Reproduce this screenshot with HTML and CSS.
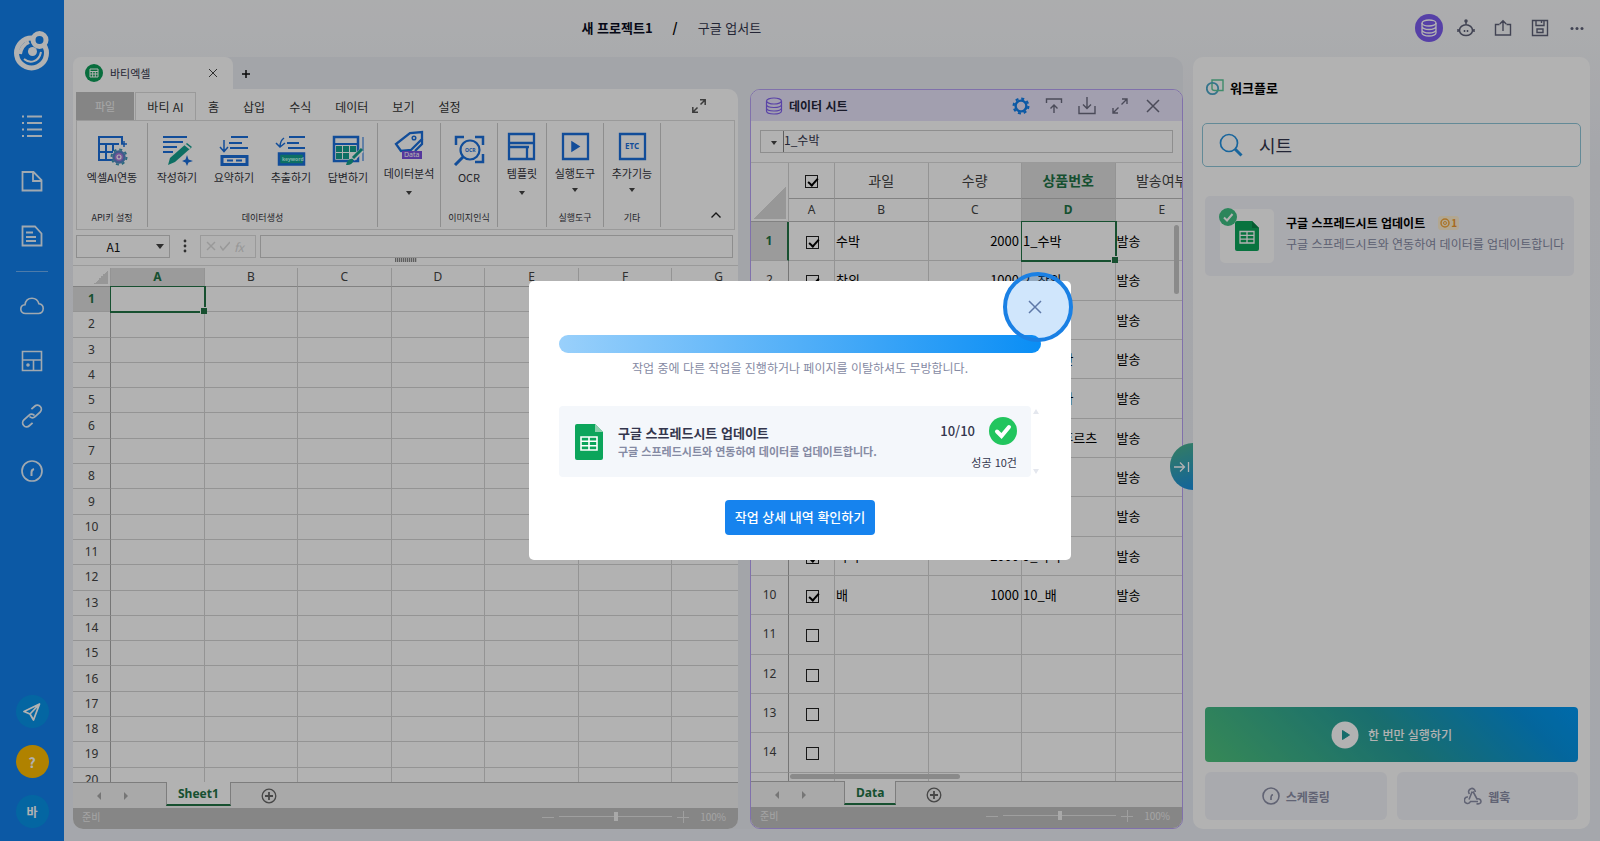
FILE: index.html
```html
<!DOCTYPE html>
<html lang="ko">
<head>
    <meta charset="UTF-8">
    <meta name="viewport" content="width=device-width, initial-scale=1.0">
    <title>새 프로젝트1</title>
    <link rel="stylesheet" href="styles.css">
</head>
<body>
    <div class="app">
        <nav class="sidebar">
            <a href="#" class="logo" aria-label="홈">
                <svg width="36" height="40" viewBox="0 0 36 40" fill="none" stroke="#fff">
                    <circle cx="17.500" cy="22" r="15" stroke-width="5"/>
                    <circle cx="25.500" cy="9" r="6.500" fill="#1280ec" stroke-width="5"/>
                    <circle cx="18.500" cy="20.500" r="4.500" fill="#fff" stroke="none"/>
                    <path d="M10 28c6 5 15 3 17-7" stroke-width="2"/>
                    <path d="M6 23c1-6 4-10 9-12" stroke-width="4"/>
                </svg>
            </a>
            <a href="#" class="nav-item" aria-label="목록">
                <svg width="24" height="24" viewBox="0 0 24 24" fill="none" stroke="#fff" stroke-width="1.800"><path d="M7 2.500h15M7 9h15M7 15.500h15M7 22h15M2 2.500h2M2 9h2M2 15.500h2M2 22h2"/></svg>
            </a>
            <a href="#" class="nav-item" aria-label="파일">
                <svg width="24" height="24" viewBox="0 0 24 24" fill="none" stroke="#fff" stroke-width="1.800"><path d="M2.500 3h11l8 8v10.500h-19zM13 3v9h8.500"/></svg>
            </a>
            <a href="#" class="nav-item" aria-label="문서">
                <svg width="24" height="24" viewBox="0 0 24 24" fill="none" stroke="#fff" stroke-width="1.800"><path d="M2.500 2.500h12.500l6.500 7v12h-19zM6 8.500h7M6 13h10M6 17h10"/></svg>
            </a>
            <hr class="nav-line">
            <a href="#" class="nav-item" aria-label="클라우드">
                <svg width="24" height="24" viewBox="0 0 24 24" fill="none" stroke="#fff" stroke-width="1.600"><path d="M5.500 19.500C2.500 19.500.8 17.500.8 15.200c0-2.500 1.800-4.200 4.200-4.400C5.500 7 8.200 4.300 12 4.300c3.500 0 6 2.200 6.900 5.500 2.600.3 4.300 2.300 4.300 4.800 0 2.800-2 4.900-4.700 4.900z"/></svg>
            </a>
            <a href="#" class="nav-item" aria-label="템플릿">
                <svg width="24" height="24" viewBox="0 0 24 24" fill="none" stroke="#fff" stroke-width="1.600"><path d="M2.500 2.500h19v19h-19zM2.500 11h19M13.500 11v10.500"/><circle cx="8" cy="16" r="1" fill="#fff"/></svg>
            </a>
            <a href="#" class="nav-item" aria-label="링크">
                <svg width="24" height="24" viewBox="0 0 24 24" fill="none" stroke="#fff" stroke-width="1.800"><path d="M9.500 12.500a4 4 0 0 0 5.600.2l5-4.600a4 4 0 0 0-5.400-5.900l-3.300 3M14.500 11.500a4 4 0 0 0-5.600-.2l-5 4.600a4 4 0 0 0 5.400 5.900l3.300-3"/></svg>
            </a>
            <a href="#" class="nav-item" aria-label="스케줄">
                <svg width="24" height="24" viewBox="0 0 24 24" fill="none" stroke="#fff" stroke-width="1.700"><circle cx="12" cy="12" r="10"/><path d="M11.500 17v-3.500c0-2 .8-3 2.500-3.500" stroke-width="2"/></svg>
            </a>
            <div class="sidebar-bottom">
                <button class="round-btn" aria-label="보내기">
                    <svg width="20" height="20" viewBox="0 0 20 20" fill="none" stroke="#fff" stroke-width="1.800" stroke-linejoin="round"><path d="M17.500 2L2 9.500l6 2.500 3.500 6zM17.500 2L8 12"/></svg>
                </button>
                <button class="round-btn round-help">?</button>
                <button class="round-btn">바</button>
            </div>
        </nav>

        <div class="page">
            <header class="topbar">
                <div class="crumbs"><b>새 프로젝트1</b><span class="slash">/</span><span>구글 업서트</span></div>
                <div class="top-actions">
                    <button class="db-btn" aria-label="데이터 시트">
                        <svg width="18" height="18" viewBox="0 0 18 18" fill="none" stroke="#fff" stroke-width="1.300"><ellipse cx="9" cy="4" rx="7" ry="3"/><path d="M2 4v3.500c0 1.600 3 3 7 3s7-1.400 7-3V4M2 7.500V11c0 1.600 3 3 7 3s7-1.400 7-3V7.500M2 11v3c0 1.600 3 3 7 3s7-1.400 7-3v-3"/></svg>
                    </button>
                    <button aria-label="봇">
                        <svg width="18" height="18" viewBox="0 0 18 18" fill="none" stroke="#5e6178" stroke-width="1.500"><path d="M2.500 11.500a6.500 5.800 0 0 1 13 0 6.500 5 0 0 1-13 0zM9 5.500V1.500M1 10v3M17 10v3M7.500 11v2M10.500 11v2"/><circle cx="9" cy="2" r="1"/></svg>
                    </button>
                    <button aria-label="내보내기">
                        <svg width="18" height="18" viewBox="0 0 18 18" fill="none" stroke="#5e6178" stroke-width="1.400"><path d="M5.500 5.500h-4v10.500h15V5.500h-4M9 12V2M5.800 5L9 1.800 12.200 5"/></svg>
                    </button>
                    <button aria-label="저장">
                        <svg width="18" height="18" viewBox="0 0 18 18" fill="none" stroke="#5e6178" stroke-width="1.400"><path d="M1.500 1.500h15v15h-15zM5 1.500v5h8v-5M10.500 2v2M6 10h6v3.500H6z"/></svg>
                    </button>
                    <button aria-label="더보기">
                        <svg width="18" height="18" viewBox="0 0 18 18" fill="#5e6178"><circle cx="4" cy="9.500" r="1.500"/><circle cx="9" cy="9.500" r="1.500"/><circle cx="14" cy="9.500" r="1.500"/></svg>
                    </button>
                </div>
            </header>

            <main class="content">
                <div class="workspace">
                    <div class="file-tabs">
                        <div class="file-tab">
                            <svg width="18" height="18" viewBox="0 0 18 18"><circle cx="9" cy="9" r="9" fill="#0c9d58"/><path d="M5 5h8v8H5zM5 7.500h8M5 10h8M7.700 7.500V13M10.300 7.500V13" fill="none" stroke="#fff"/></svg>
                            <span>바티엑셀</span>
                            <button class="tab-close" aria-label="탭 닫기"><svg width="10" height="10" viewBox="0 0 10 10" stroke="#444"><path d="M1 1l8 8M9 1l-8 8"/></svg></button>
                        </div>
                        <button class="tab-add" aria-label="탭 추가"><svg width="8" height="8" viewBox="0 0 8 8" stroke="#111" stroke-width="1.500"><path d="M4 0v8M0 4h8"/></svg></button>
                    </div>

                    <div class="panels">
                        <section class="panel excel">
                            <div class="menu">
                                <button class="menu-file">파일</button>
                                <button class="menu-active">바티 AI</button>
                                <button>홈</button>
                                <button>삽입</button>
                                <button>수식</button>
                                <button>데이터</button>
                                <button>보기</button>
                                <button>설정</button>
                                <button class="expand" aria-label="확대"><svg width="16" height="16" viewBox="0 0 16 16" fill="none" stroke="#555" stroke-width="1.500"><path d="M9.500 6.500L14 2M9 1.800h5.200V7M6.500 9.500L2 14M1.800 9v5.200H7"/></svg></button>
                            </div>
                            <div class="ribbon">
                                <div class="group g-key">
                                    <div class="tools">
                                        <button class="tool">
                                            <svg width="32" height="32" viewBox="0 0 32 32" fill="none" stroke="#1b6fdc" stroke-width="2"><path d="M17 26H3V3h23v7M3 10h20M3 18h14M10 10v16M17 10v7"/><path d="M28 7v6M25 10h6" stroke-width="1.500"/><circle cx="23" cy="23" r="5.500" fill="#a878d8" stroke="#5a86c8" stroke-width="2.500"/><circle cx="23" cy="23" r="7.500" stroke="#3f97b5" stroke-width="2" stroke-dasharray="3 2.890"/><circle cx="23" cy="23" r="2" stroke="#fff" stroke-width="1.200"/></svg>
                                            <span>엑셀AI연동</span>
                                        </button>
                                    </div>
                                    <p>API키 설정</p>
                                </div>
                                <div class="group g-data">
                                    <div class="tools">
                                        <button class="tool">
                                            <svg width="32" height="32" viewBox="0 0 32 32" fill="none" stroke="#1b6fdc" stroke-width="2"><path d="M2 3h24M2 8h20M2 13h14M2 18h10"/><path d="M7 31l2-7L26 9l5 4-17 15z" fill="#14a08f" stroke="none"/><path d="M24 10.500l5 4" stroke="#fff"/><path d="M26 21l1.500 4.500L32 27l-4.500 1.500L26 32l-1.500-3.500L21 27l3.500-1.500z" fill="#1b6fdc" stroke="none"/></svg>
                                            <span>작성하기</span>
                                        </button>
                                        <button class="tool">
                                            <svg width="32" height="32" viewBox="0 0 32 32" fill="none" stroke="#1b6fdc" stroke-width="2"><path d="M13 3h17M11 9h13M12 14h18"/><path d="M6 6v11M2 13l4 4.500L10 13" stroke-width="1.500"/><path d="M4 22.500h25v8H4z" stroke-width="3"/><path d="M9 26.500h6M18 26.500h6" stroke-width="2"/></svg>
                                            <span>요약하기</span>
                                        </button>
                                        <button class="tool">
                                            <svg width="32" height="32" viewBox="0 0 32 32" fill="none" stroke="#1b6fdc" stroke-width="2"><path d="M14 3h16M12 9h12M13 14h17"/><path d="M9 4c-3 2-4 5-4 9M1 9l4 4 5-4" stroke-width="1.500"/><path d="M4 19.500h25v11H4z" fill="#14a08f" stroke-width="2.500"/><text x="7" y="27" class="kw-text">keyword</text></svg>
                                            <span>추출하기</span>
                                        </button>
                                        <button class="tool">
                                            <svg width="32" height="32" viewBox="0 0 32 32" fill="none" stroke="#1b6fdc" stroke-width="2"><path d="M2 3h24v24H2z" stroke-width="2.500"/><path d="M2 10h24" /><path d="M4 12h6v6H4zM11 12h6v6h-6zM18 12h6v6h-6zM4 19h6v6H4zM11 19h6v6h-6z" fill="#14a08f" stroke="none"/><path d="M31 3v24" stroke-width="1"/><path d="M30 16l-9 9" stroke="#fff" stroke-width="5"/><path d="M30 15l-9 9" stroke="#14a08f" stroke-width="3"/><path d="M14 31c1-5 4-7 7-6 1 4-2 6-7 6z" fill="#14a08f" stroke="none"/></svg>
                                            <span>답변하기</span>
                                        </button>
                                    </div>
                                    <p>데이터생성</p>
                                </div>
                                <div class="group g-63">
                                    <div class="tools tools-up">
                                        <button class="tool">
                                            <svg width="32" height="32" viewBox="0 0 32 32" fill="none" stroke="#1b6fdc" stroke-width="2.300"><path d="M8 21l-5-7L17 3l12-1v7L18 20z"/><circle cx="21" cy="8" r="1.800" stroke-width="1.500"/><path d="M29 9v5l-7 7"/><rect x="9" y="21" width="20" height="8" fill="#7a4fe0" stroke="none"/><text x="11" y="27" class="data-text">Data</text></svg>
                                            <span>데이터분석</span><i class="caret caret-low"></i>
                                        </button>
                                    </div>
                                </div>
                                <div class="group g-57">
                                    <div class="tools">
                                        <button class="tool">
                                            <svg width="32" height="32" viewBox="0 0 32 32" fill="none" stroke="#1b6fdc" stroke-width="2.500"><path d="M3 11V3h8M22 3h8v8M30 20v8h-8"/><circle cx="17" cy="16" r="9.500" stroke-width="2.200"/><path d="M10 23l-8 8" stroke-width="3"/><text x="12" y="18" class="ocr-text">OCR</text></svg>
                                            <span>OCR</span>
                                        </button>
                                    </div>
                                    <p>이미지인식</p>
                                </div>
                                <div class="group g-49">
                                    <div class="tools tools-up">
                                        <button class="tool">
                                            <svg width="32" height="32" viewBox="0 0 32 32" fill="none" stroke="#1b6fdc" stroke-width="2.300"><path d="M3 4h25v25H3zM3 13h25M3 17h20M21 17v12"/></svg>
                                            <span>템플릿</span><i class="caret caret-low"></i>
                                        </button>
                                    </div>
                                </div>
                                <div class="group g-57">
                                    <div class="tools tools-up">
                                        <button class="tool">
                                            <svg width="32" height="32" viewBox="0 0 32 32" fill="none" stroke="#1b6fdc" stroke-width="2.300"><path d="M4 4h25v25H4z"/><path d="M13 12v9l7-4.500z" fill="#1b6fdc" stroke-width="1.500"/></svg>
                                            <span>실행도구</span><i class="caret"></i>
                                        </button>
                                    </div>
                                    <p>실행도구</p>
                                </div>
                                <div class="group g-57">
                                    <div class="tools tools-up">
                                        <button class="tool">
                                            <svg width="32" height="32" viewBox="0 0 32 32" fill="none" stroke="#1b6fdc" stroke-width="2.300"><path d="M4 4h25v25H4z"/><text x="9" y="19" class="etc-text">ETC</text></svg>
                                            <span>추가기능</span><i class="caret"></i>
                                        </button>
                                    </div>
                                    <p>기타</p>
                                </div>
                                <button class="fold" aria-label="리본 접기"><svg width="12" height="8" viewBox="0 0 12 8" fill="none" stroke="#222" stroke-width="1.400"><path d="M1.500 6.500L6 2l4.500 4.500"/></svg></button>
                            </div>
                            <div class="formula">
                                <div class="name-box"><input type="text" value="A1" aria-label="이름 상자"><i class="caret"></i></div>
                                <svg width="4" height="14" viewBox="0 0 4 14" fill="#444"><circle cx="2" cy="2" r="1.400"/><circle cx="2" cy="7" r="1.400"/><circle cx="2" cy="12" r="1.400"/></svg>
                                <div class="fx">
                                    <svg width="10" height="10" viewBox="0 0 10 10" stroke="#dcdcdc" fill="none" stroke-width="1.500"><path d="M1 1l8 8M9 1L1 9"/></svg>
                                    <svg width="10" height="10" viewBox="0 0 10 10" stroke="#dcdcdc" fill="none" stroke-width="1.500"><path d="M0 5l3 4 7-8"/></svg>
                                    <i>fx</i>
                                </div>
                                <input class="fx-input" type="text" aria-label="수식 입력줄">
                            </div>
                            <div class="grip"><span></span></div>
                            <div class="sheet"><table class="grid" id="mainGrid"></table></div>
                            <div class="sheet-bar">
                                <button class="arrow arrow-left" aria-label="이전 시트"></button>
                                <button class="arrow arrow-right" aria-label="다음 시트"></button>
                                <button class="sheet-tab">Sheet1</button>
                                <button class="sheet-add" aria-label="시트 추가"><svg width="16" height="16" viewBox="0 0 16 16" fill="none" stroke="#666" stroke-width="1.300"><circle cx="8" cy="8" r="6.800"/><path d="M8 4v8M4 8h8" stroke-width="1.800"/></svg></button>
                            </div>
                            <div class="status">
                                <span>준비</span>
                                <div class="zoom"><button aria-label="축소"><svg width="12" height="12" viewBox="0 0 12 12" stroke="#e4e4e4"><path d="M0 6.500h12"/></svg></button><input type="range" min="0" max="200" value="100" aria-label="배율"><button aria-label="확대"><svg width="12" height="12" viewBox="0 0 12 12" stroke="#e4e4e4"><path d="M0 6.500h12M6.500 0v12"/></svg></button><span>100%</span></div>
                            </div>
                        </section>

                        <section class="panel data">
                            <div class="data-head">
                                <svg width="18" height="18" viewBox="0 0 18 18" fill="none" stroke="#8160f0" stroke-width="1.200"><ellipse cx="9" cy="4" rx="7.500" ry="3"/><path d="M1.500 4v10c0 1.600 3 3 7.500 3s7.500-1.400 7.500-3V4M1.500 7.500c0 1.600 3 3 7.500 3s7.500-1.400 7.500-3M1.500 11c0 1.600 3 3 7.500 3s7.500-1.400 7.500-3"/></svg>
                                <h2>데이터 시트</h2>
                                <div class="data-actions">
                                    <button aria-label="설정"><svg width="18" height="18" viewBox="0 0 18 18" fill="none" stroke="#1280ec"><circle cx="9" cy="9" r="5.400" stroke-width="2.400"/><circle cx="9" cy="9" r="7.400" stroke-width="2.200" stroke-dasharray="3 2.810"/></svg></button>
                                    <button aria-label="업로드"><svg width="18" height="18" viewBox="0 0 18 18" fill="none" stroke="#6c6c80" stroke-width="1.400"><path d="M1.500 6V2h15v4M9 16V8M5.500 11.500L9 8l3.500 3.500"/></svg></button>
                                    <button aria-label="다운로드"><svg width="18" height="18" viewBox="0 0 18 18" fill="none" stroke="#6c6c80" stroke-width="1.400"><path d="M1 9v7.500h16V9M9 0v11M5 7.500l4 4 4-4"/></svg></button>
                                    <button aria-label="확대"><svg width="18" height="18" viewBox="0 0 18 18" fill="none" stroke="#6c6c80" stroke-width="1.400"><path d="M10.500 7.500L15.500 2.500M11 2h5v5M7.500 10.500L2.500 15.500M2 11v5h5"/></svg></button>
                                    <button aria-label="닫기"><svg width="18" height="18" viewBox="0 0 18 18" fill="none" stroke="#6c6c80" stroke-width="1.500"><path d="M3 3l12 12M15 3L3 15"/></svg></button>
                                </div>
                            </div>
                            <div class="data-formula"><i class="caret"></i><input type="text" value="1_수박" aria-label="셀 값"></div>
                            <div class="sheet">
                                <table class="grid data-grid" id="dataGrid"></table>
                                <span class="bar-v"></span>
                                <span class="bar-h"></span>
                            </div>
                            <div class="sheet-bar">
                                <button class="arrow arrow-left" aria-label="이전 시트"></button>
                                <button class="arrow arrow-right" aria-label="다음 시트"></button>
                                <button class="sheet-tab">Data</button>
                                <button class="sheet-add" aria-label="시트 추가"><svg width="16" height="16" viewBox="0 0 16 16" fill="none" stroke="#666" stroke-width="1.300"><circle cx="8" cy="8" r="6.800"/><path d="M8 4v8M4 8h8" stroke-width="1.800"/></svg></button>
                            </div>
                            <div class="status">
                                <span>준비</span>
                                <div class="zoom"><button aria-label="축소"><svg width="12" height="12" viewBox="0 0 12 12" stroke="#e4e4e4"><path d="M0 6.500h12"/></svg></button><input type="range" min="0" max="200" value="100" aria-label="배율"><button aria-label="확대"><svg width="12" height="12" viewBox="0 0 12 12" stroke="#e4e4e4"><path d="M0 6.500h12M6.500 0v12"/></svg></button><span>100%</span></div>
                            </div>
                        </section>
                    </div>
                </div>

                <aside class="workflow">
                    <button class="handle" aria-label="패널 접기"><svg width="16" height="12" viewBox="0 0 16 12" fill="none" stroke="#fff" stroke-width="1.300"><path d="M0 6h10M6 1.500L10.500 6 6 10.500M14.500 1v10"/></svg></button>
                    <h2>
                        <svg width="18" height="17" viewBox="0 0 18 17" fill="none" stroke-width="1.400"><path d="M6 4V1h11v10.500h-4" stroke="#5cc79a"/><circle cx="6.500" cy="9.500" r="5.700" stroke="#4ba6c8" stroke-width="1.800"/><path d="M6 4v5.500c0 1.500 1 2 3 2h4" stroke="#5cc79a"/></svg>
                        워크플로
                    </h2>
                    <label class="search">
                        <svg width="24" height="24" viewBox="0 0 24 24" fill="none" stroke="#2391e0"><circle cx="10" cy="10" r="8.500" stroke-width="1.700"/><path d="M16 16l6.500 6.500" stroke-width="3"/></svg>
                        <input type="text" value="시트" aria-label="워크플로 검색">
                    </label>
                    <article class="flow-card">
                        <div class="flow-icon">
                            <svg width="24" height="30" viewBox="0 0 24 30"><path d="M2 0h15l7 7v21a2 2 0 0 1-2 2H2a2 2 0 0 1-2-2V2a2 2 0 0 1 2-2z" fill="#0ca55b"/><path d="M17 0l7 7h-7z" fill="#0a8548"/><path d="M5 10.500h14v11.500H5zM5 14.300h14M5 18.200h14M12 10.500V22" fill="none" stroke="#fff" stroke-width="1.300"/></svg>
                            <span class="flow-check"><svg width="18" height="18" viewBox="0 0 18 18" fill="none"><circle cx="9" cy="9" r="9" fill="#3fbf83"/><path d="M5 9.500l3 3 5.500-6.500" stroke="#fff" stroke-width="2"/></svg></span>
                        </div>
                        <div class="flow-text">
                            <h3>구글 스프레드시트 업데이트 <span class="coin"><svg width="10" height="10" viewBox="0 0 10 10" fill="none" stroke="#f5a73b"><circle cx="5" cy="5" r="4" stroke-width="1.500"/><circle cx="5" cy="5" r="1.500"/></svg>1</span></h3>
                            <p>구글 스프레드시트와 연동하여 데이터를 업데이트합니다</p>
                        </div>
                    </article>
                    <div class="flow-actions">
                        <button class="run"><svg width="28" height="28" viewBox="0 0 28 28"><circle cx="14" cy="14" r="13.500" fill="#fff"/><path d="M11.500 9.500l7 4.500-7 4.500z" fill="#1f9a98" stroke="#1f9a98" stroke-linejoin="round"/></svg>한 번만 실행하기</button>
                        <button class="sub"><svg width="18" height="18" viewBox="0 0 18 18" fill="none" stroke="#8b8fa6" stroke-width="1.600"><circle cx="9" cy="9" r="8"/><path d="M9 13V10.500C9 9 9.600 8 11 7.800"/></svg>스케줄링</button>
                        <button class="sub"><svg width="18" height="18" viewBox="0 0 18 18" fill="none" stroke="#8b8fa6" stroke-width="1.600"><path d="M5.500 7a3.300 3.300 0 1 1 5.700-2M8.200 4.500L5 12.500M9 4.500l4 7.500c2-.8 4 .5 4 2.500M4 10a3.200 3.200 0 1 0 2.500 4.500h7.500M12.500 16.500c2 1 4.500 0 4.500-2"/></svg>웹훅</button>
                    </div>
                </aside>
            </main>
        </div>
    </div>

    <div class="overlay">
        <div class="modal" role="dialog" aria-label="작업 진행">
            <div class="progress"></div>
            <p class="notice">작업 중에 다른 작업을 진행하거나 페이지를 이탈하셔도 무방합니다.</p>
            <div class="job-list">
                <div class="job">
                    <svg width="28" height="36" viewBox="0 0 28 36"><path d="M2 0h18l8 8v26a2 2 0 0 1-2 2H2a2 2 0 0 1-2-2V2a2 2 0 0 1 2-2z" fill="#0ca55b"/><path d="M20 0l8 8h-8z" fill="#8dd0ae"/><path d="M6 13h16v13H6zM6 17.300h16M6 21.700h16M14 13v13" fill="none" stroke="#fff" stroke-width="1.600"/></svg>
                    <div class="job-text">
                        <h3>구글 스프레드시트 업데이트</h3>
                        <p>구글 스프레드시트와 연동하여 데이터를 업데이트합니다.</p>
                    </div>
                    <div class="job-result">
                        <div class="job-count"><b>10/10</b><svg width="28" height="28" viewBox="0 0 28 28" fill="none"><circle cx="14" cy="14" r="14" fill="#22c55e"/><path d="M8 14.500l4.500 4.500L20 10" stroke="#fff" stroke-width="4" stroke-linecap="round"/></svg></div>
                        <span>성공 10건</span>
                    </div>
                </div>
                <div class="job-scroll"><i class="up"></i><i class="down"></i></div>
            </div>
            <button class="detail-btn">작업 상세 내역 확인하기</button>
            <button class="modal-close" aria-label="닫기"><svg width="14" height="14" viewBox="0 0 14 14" stroke="#5f79a8" stroke-width="1.500"><path d="M1 1l12 12M13 1L1 13"/></svg></button>
        </div>
    </div>

    <script src="script.js"></script>
</body>
</html>
```
FILE: styles.css
```css
* {
    box-sizing: border-box;
}

body {
    margin: 0;
    font-family: "Noto Sans CJK KR", "Noto Sans", sans-serif;
    font-size: 12px;
    color: #33364d;
    overflow: hidden;
}

button {
    border: none;
    background: none;
    padding: 0;
    margin: 0;
    font: inherit;
    color: inherit;
    cursor: pointer;
}

input {
    font: inherit;
    color: inherit;
    border: none;
    background: none;
    outline: none;
    padding: 0;
    margin: 0;
    min-width: 0;
}

h2, h3, p {
    margin: 0;
}

svg {
    display: block;
    flex-shrink: 0;
}

.app {
    display: flex;
    height: 100vh;
}

/* sidebar */
.sidebar {
    width: 64px;
    flex-shrink: 0;
    background: #1280ec;
    display: flex;
    flex-direction: column;
    align-items: center;
    padding: 31px 0 13px;
}

.logo {
    margin-bottom: 43px;
}

.nav-item {
    margin-bottom: 31px;
    opacity: 0.9;
}

.nav-line {
    width: 32px;
    border: none;
    border-top: 1px solid #6fb1f4;
    margin: -8px 0 22px;
}

.sidebar-bottom {
    margin-top: auto;
    display: flex;
    flex-direction: column;
    gap: 17px;
}

.round-btn {
    width: 33px;
    height: 33px;
    border-radius: 50%;
    background: #0693e8;
    color: #fff;
    font-weight: bold;
    display: flex;
    align-items: center;
    justify-content: center;
}

.round-help {
    background: #fdba00;
    font-size: 14px;
}

/* top bar */
.page {
    flex: 1;
    min-width: 0;
    display: flex;
    flex-direction: column;
    background: linear-gradient(#f7f8fa, #eceef4 20%, #edf0f6);
}

.topbar {
    height: 57px;
    display: flex;
    align-items: center;
    padding: 0 14px 2px 0;
}

.crumbs {
    display: flex;
    align-items: center;
    padding-left: 34%;
    font-size: 13px;
}

.crumbs b {
    color: #0a0c22;
}

.crumbs .slash {
    color: #000;
    font-weight: bold;
    margin: 0 20px;
}

.top-actions {
    margin-left: auto;
    display: flex;
    align-items: center;
    gap: 19px;
}

.db-btn {
    width: 28px;
    height: 28px;
    border-radius: 50%;
    background: #7c5cf0;
    display: flex;
    align-items: center;
    justify-content: center;
    margin-right: -5px;
}

.content {
    flex: 1;
    min-height: 0;
    display: grid;
    grid-template-columns: minmax(0, 1110fr) minmax(0, 397fr);
    gap: 10px;
    padding: 0 10px 12px 9px;
}

.workspace {
    display: flex;
    flex-direction: column;
    min-height: 0;
    background: #eaecf2;
    border-radius: 12px;
}

.file-tabs {
    display: flex;
    height: 32px;
}

.file-tab {
    width: 160px;
    display: flex;
    align-items: center;
    gap: 7px;
    padding: 0 15px 0 12px;
    background: #fff;
    border-radius: 8px 8px 0 0;
    font-size: 11px;
}

.tab-close {
    margin-left: auto;
}

.tab-add {
    margin: 2px 0 0 9px;
}

.panels {
    flex: 1;
    min-height: 0;
    display: grid;
    grid-template-columns: minmax(0, 665fr) minmax(0, 433fr);
    gap: 12px;
}

.panel {
    min-height: 0;
    display: flex;
    flex-direction: column;
    background: #fff;
    overflow: hidden;
    border-radius: 0 10px 10px 10px;
}

/* excel menu and ribbon */
.menu {
    display: flex;
    height: 31px;
    padding: 3px 3px 0;
    color: #333;
}

.menu button {
    padding: 0 12px;
    font-size: 12px;
}

.menu .menu-file {
    width: 58px;
    background: #bfbfbf;
    color: #f0f0f0;
    font-size: 11px;
    margin-right: 1px;
}

.menu .menu-active {
    width: 61px;
    padding: 0;
    border: 1px solid #ddd;
    border-bottom: none;
}

.menu .expand {
    margin-left: auto;
    padding: 0 28px;
}

.ribbon {
    display: flex;
    height: 110px;
    margin: 0 3px;
    border: 1px solid #ddd;
    padding: 2px 0;
    color: #33343c;
}

.group {
    display: flex;
    flex-direction: column;
    align-items: center;
    flex-shrink: 0;
    border-right: 1px solid #ccc;
}

.group p {
    margin-top: auto;
    font-size: 9px;
    line-height: 19px;
}

.g-key {
    width: 71px;
}

.g-data {
    width: 230px;
}

.g-63 {
    width: 63px;
}

.g-57 {
    width: 57px;
}

.g-49 {
    width: 49px;
}

.tools {
    display: flex;
    padding-top: 11px;
}

.tools-up {
    padding-top: 7px;
}

.tool {
    width: 57px;
    display: flex;
    flex-direction: column;
    align-items: center;
    font-size: 11px;
    line-height: 16px;
    white-space: nowrap;
    gap: 3px;
}

.kw-text {
    font: bold 5px "Noto Sans", sans-serif;
    fill: #bfe;
    stroke: none;
}

.data-text {
    font: 7px "Noto Sans", sans-serif;
    fill: #fff;
    stroke: none;
}

.ocr-text {
    font: bold 5px "Noto Sans", sans-serif;
    fill: #1b6fdc;
    stroke: none;
}

.etc-text {
    font: bold 8px "Noto Sans", sans-serif;
    fill: #1b6fdc;
    stroke: none;
}

.caret {
    width: 0;
    height: 0;
    border: 3px solid transparent;
    border-top: 4px solid #444;
    border-bottom: none;
    margin-top: 4px;
}

.caret-low {
    margin-top: 7px;
}

.fold {
    margin-left: auto;
    align-self: flex-end;
    padding: 0 12px 8px;
}

.formula {
    display: flex;
    align-items: center;
    height: 32px;
    padding: 0 5px 0 3px;
}

.name-box {
    width: 94px;
    height: 23px;
    border: 1px solid #ccc;
    display: flex;
    align-items: center;
    padding: 0 5px 0 0;
    margin-right: 13px;
}

.name-box input {
    flex: 1;
    padding-right: 6px;
    text-align: center;
    color: #111;
}

.name-box .caret {
    border-width: 5px 4px 0;
    margin: 0;
}

.fx {
    width: 56px;
    height: 23px;
    border: 1px solid #ddd;
    display: flex;
    align-items: center;
    gap: 4px;
    padding-left: 5px;
    margin: 0 4px 0 13px;
    color: #d8d8d8;
}

.fx-input {
    flex: 1;
    height: 23px;
    border: 1px solid #ccc;
}

.grip {
    height: 4px;
    display: flex;
    justify-content: center;
    border-bottom: 1px solid #ddd;
    margin-bottom: 2px;
}

.grip span {
    width: 22px;
    height: 4px;
    margin-top: -4px;
    background: repeating-linear-gradient(90deg, #888 0 1px, #ddd 1px 2px);
}

/* spreadsheet grids */
.sheet {
    flex: 1;
    min-height: 0;
    overflow: hidden;
    position: relative;
}

.grid {
    table-layout: fixed;
    width: 693px;
    height: 525px;
    border-collapse: separate;
    border-spacing: 0;
    color: #000;
}

.grid th,
.grid td {
    border-right: 1px solid #d4d4d4;
    border-bottom: 1px solid #d4d4d4;
    padding: 0;
    line-height: 16px;
    overflow: hidden;
    white-space: nowrap;
}

.grid th {
    font: 12px "Noto Sans", "Noto Sans CJK KR", sans-serif;
    line-height: 16px;
    color: #444;
}

.grid thead th {
    height: 19px;
    border-bottom-color: #bbb;
}

.grid tbody th {
    border-right-color: #aaa;
}

.grid .col-head {
    width: 38px;
}

.grid .corner {
    background: linear-gradient(135deg, transparent 50%, #d8d8d8 50%) right 2px bottom 2px / 14px 14px no-repeat;
}

.grid th.on {
    background: #dedede;
    color: #217346;
    font-weight: bold;
}

.grid td.sel {
    position: relative;
    overflow: visible;
    box-shadow: 0 0 0 1px #217346;
    border-color: #217346;
}

.grid td.sel::after {
    content: '';
    position: absolute;
    right: -3px;
    bottom: -3px;
    width: 6px;
    height: 6px;
    background: #217346;
    border: 1px solid #fff;
    border-right: none;
    border-bottom: none;
}

.data-grid {
    width: 458px;
    height: 649px;
}

.data-grid .col-check {
    width: 46px;
}

.data-grid thead .names th {
    height: 36px;
    font-size: 14px;
}

.data-grid thead .letters th {
    height: 23px;
}

.data-grid td {
    font-size: 13px;
    padding-left: 1px;
}

.data-grid td.num {
    text-align: right;
    padding-right: 2px;
}

.data-grid td.center {
    text-align: center;
}

.data-grid .corner {
    background-size: 32px 32px;
}

.data-grid tbody th.on {
    border-right: 2px solid #217346;
}

.data-grid input {
    appearance: none;
    width: 13px;
    height: 13px;
    border: 1px solid #222;
    vertical-align: middle;
    position: relative;
}

.data-grid input:checked::after {
    content: '';
    position: absolute;
    left: 2px;
    top: 2px;
    width: 8px;
    height: 4px;
    border: solid #000;
    border-width: 0 0 2px 2px;
    transform: rotate(-48deg);
}

.bar-v {
    position: absolute;
    right: 3px;
    top: 62px;
    width: 5px;
    height: 69px;
    border-radius: 3px;
    background: #c6c6c6;
}

.bar-h {
    position: absolute;
    left: 39px;
    bottom: 2px;
    width: 170px;
    height: 5px;
    border-radius: 3px;
    background: #c6c6c6;
}

.sheet-bar {
    display: flex;
    align-items: center;
    height: 26px;
    background: #f2f2f2;
    border-top: 1px solid #b4b4b4;
    padding-left: 24px;
}

.arrow {
    border: 4px solid transparent;
}

.arrow-left {
    border-left: none;
    border-right: 4px solid #aaa;
    margin-right: 23px;
}

.arrow-right {
    border-right: none;
    border-left: 4px solid #aaa;
    margin-right: 38px;
}

.sheet-tab {
    align-self: flex-start;
    height: 24px;
    margin-top: -1px;
    padding: 0 11px;
    background: #fff;
    border: 1px solid #b4b4b4;
    border-top: none;
    border-bottom: 2px solid #217346;
    color: #217346;
    font: bold 12px "Noto Sans", sans-serif;
}

.sheet-add {
    margin-left: 30px;
}

.status {
    display: flex;
    align-items: center;
    justify-content: space-between;
    height: 21px;
    padding: 0 12px 4px 9px;
    background: #c0c0c0;
    color: #ececec;
    font-size: 10px;
}

.zoom {
    display: flex;
    align-items: center;
    gap: 5px;
}

.zoom input {
    appearance: none;
    width: 113px;
    height: 1px;
    background: #e4e4e4;
}

.zoom input::-webkit-slider-thumb {
    appearance: none;
    width: 4px;
    height: 9px;
    background: #f2f2f2;
}

.zoom span {
    margin-left: 6px;
}

/* data sheet panel */
.data {
    border: 1px solid #b8a2f5;
    border-radius: 10px;
}

.data-head {
    display: flex;
    align-items: center;
    height: 31px;
    padding: 0 20px 0 14px;
    gap: 6px;
    background: #e8e4fb;
    flex-shrink: 0;
}

.data-head h2 {
    font-size: 12px;
    color: #24263a;
}

.data-actions {
    display: flex;
    gap: 15px;
    margin-left: auto;
}

.data-formula {
    display: flex;
    height: 23px;
    margin: 9px;
    border: 1px solid #ccc;
    flex-shrink: 0;
}

.data-formula .caret {
    margin: 10px 6px 0 10px;
}

.data-formula input {
    flex: 1;
    border-left: 1px solid #888;
    font-size: 12px;
    padding-bottom: 4px;
}

.data .sheet {
    border-top: 1px solid #ddd;
}

/* workflow panel */
.workflow {
    position: relative;
    display: flex;
    flex-direction: column;
    min-height: 0;
    background: #fff;
    border-radius: 10px;
    padding: 18px 9px 9px;
}

.handle {
    position: absolute;
    left: -23px;
    top: 50%;
    width: 23px;
    height: 47px;
    border-radius: 24px 0 0 24px;
    background: linear-gradient(160deg, #4eb58a, #1a8fe0);
    padding-left: 4px;
}

.workflow h2 {
    display: flex;
    align-items: center;
    gap: 6px;
    height: 24px;
    font-size: 13px;
    color: #000;
    padding-left: 4px;
}

.search {
    display: flex;
    align-items: center;
    height: 44px;
    margin-top: 24px;
    padding: 0 16px;
    border: 1px solid #8fc6d8;
    border-radius: 5px;
    gap: 16px;
}

.search input {
    flex: 1;
    font-size: 18px;
}

.flow-card {
    display: flex;
    align-items: center;
    gap: 12px;
    height: 80px;
    margin: 29px 7px 0 3px;
    padding: 0 15px;
    background: #f3f4fa;
    border-radius: 5px;
}

.flow-icon {
    position: relative;
    width: 54px;
    height: 54px;
    border-radius: 5px;
    background: #fff;
    display: flex;
    align-items: center;
    justify-content: center;
    flex-shrink: 0;
}

.flow-check {
    position: absolute;
    left: -1px;
    top: -1px;
}

.flow-text {
    white-space: nowrap;
    padding-bottom: 6px;
}

.flow-text h3 {
    display: flex;
    align-items: center;
    font-size: 12px;
    line-height: 22px;
    color: #000;
}

.flow-text p {
    line-height: 20px;
    color: #858aa3;
}

.coin {
    display: flex;
    align-items: center;
    gap: 1px;
    height: 14px;
    margin-left: 13px;
    padding: 0 2px;
    border-radius: 3px;
    background: #fff0d0;
    color: #f0962a;
    font-size: 10px;
}

.flow-actions {
    margin: auto 3px 0;
    display: grid;
    grid-template-columns: 1fr 1fr;
    gap: 10px;
}

.run {
    grid-column: 1 / 3;
    height: 55px;
    display: flex;
    align-items: center;
    justify-content: center;
    gap: 9px;
    border-radius: 4px;
    background: linear-gradient(45deg, #4fc47c, #259e9e 50%, #0693e0 85%, #0099f5);
    color: #fff;
    font-size: 12px;
    font-weight: 500;
}

.sub {
    height: 48px;
    display: flex;
    align-items: center;
    justify-content: center;
    gap: 6px;
    border-radius: 6px;
    background: #f3f4fa;
    color: #8b8fa6;
    font-size: 12px;
    font-weight: bold;
}

/* progress dialog */
.overlay {
    position: fixed;
    inset: 0;
    display: flex;
    align-items: center;
    justify-content: center;
    background: rgba(0,0,0,0.3);
}

.modal {
    position: relative;
    width: 542px;
    background: #fff;
    border-radius: 5px;
    padding: 54px 30px 25px;
    display: flex;
    flex-direction: column;
    align-items: center;
}

.progress {
    width: 100%;
    height: 18px;
    border-radius: 9px;
    background: linear-gradient(90deg, #99d0fb, #0a8ef5);
}

.notice {
    line-height: 20px;
    margin: 5px 0 28px;
    color: #858aa3;
}

.job-list {
    width: 100%;
    display: flex;
}

.job {
    flex: 1;
    height: 71px;
    display: flex;
    align-items: center;
    padding: 0 14px 0 16px;
    background: #f4f7fb;
    border-radius: 4px;
}

.job-text {
    margin-left: 15px;
    white-space: nowrap;
}

.job-text h3 {
    font-size: 13px;
    line-height: 18px;
    color: #33364d;
}

.job-text p {
    font-size: 11px;
    line-height: 18px;
    font-weight: bold;
    color: #858aa3;
}

.job-result {
    margin-left: auto;
    display: flex;
    flex-direction: column;
    align-items: flex-end;
    font-size: 11px;
    line-height: 16px;
    gap: 9px;
    padding-top: 3px;
}

.job-count {
    display: flex;
    align-items: center;
    gap: 14px;
    font-size: 13px;
}

.job-count b {
    font-weight: 500;
}

.job-scroll {
    width: 10px;
    display: flex;
    flex-direction: column;
    justify-content: space-between;
    align-items: center;
    padding: 3px 0;
}

.up,
.down {
    border: 3px solid transparent;
}

.up {
    border-top: none;
    border-bottom: 5px solid #e4e7ee;
}

.down {
    border-bottom: none;
    border-top: 5px solid #e4e7ee;
}

.detail-btn {
    width: 150px;
    height: 35px;
    margin-top: 23px;
    padding-bottom: 2px;
    border-radius: 4px;
    background: #1683ee;
    color: #fff;
    font-weight: 500;
    font-size: 13px;
}

.modal-close {
    position: absolute;
    top: -9px;
    right: -2px;
    width: 70px;
    height: 70px;
    border: 4px solid #1a80e4;
    border-radius: 50%;
    background: rgba(22,131,238,0.2);
    display: flex;
    align-items: center;
    justify-content: center;
    padding-right: 6px;
}
```
FILE: script.js
```javascript
const fruits = [
    ['수박', 2000], ['참외', 1000], ['포도', 1500], ['아보간', 3000], ['바나나', 2500],
    ['용과후르츠', 4000], ['딸기', 1200], ['감귤', 1800], ['사과', 2000], ['배', 1000]
];

function headCells(letters, selected) {
    return letters.map(l => `<th class="${l === selected ? 'on' : ''}">${l}</th>`).join('');
}

function buildMain() {
    const cols = ['A', 'B', 'C', 'D', 'E', 'F', 'G'];
    let html = `<thead><tr><th class="col-head corner"></th>${headCells(cols, 'A')}</tr></thead><tbody>`;
    for (let r = 1; r <= 20; r++) {
        html += `<tr><th class="${r === 1 ? 'on' : ''}">${r}</th>`;
        cols.forEach((c, i) => {
            html += `<td class="${r === 1 && i === 0 ? 'sel' : ''}"></td>`;
        });
        html += '</tr>';
    }
    document.getElementById('mainGrid').innerHTML = html + '</tbody>';
}

function buildData() {
    let html = `<thead><tr class="names"><th class="col-head corner" rowspan="2"></th>
        <th class="col-check"><input type="checkbox" aria-label="전체 선택" checked></th>
        <th>과일</th><th>수량</th><th class="on">상품번호</th><th>발송여부</th></tr>
        <tr class="letters">${headCells(['A', 'B', 'C', 'D', 'E'], 'D')}</tr></thead><tbody>`;
    for (let r = 1; r <= 15; r++) {
        const item = fruits[r - 1];
        html += `<tr><th class="${r === 1 ? 'on' : ''}">${r}</th>
            <td class="center"><input type="checkbox" aria-label="${r}행" ${item ? 'checked' : ''}></td>
            <td>${item ? item[0] : ''}</td>
            <td class="num">${item ? item[1] : ''}</td>
            <td class="${r === 1 ? 'sel' : ''}">${item ? r + '_' + item[0] : ''}</td>
            <td>${item ? '발송' : ''}</td></tr>`;
    }
    document.getElementById('dataGrid').innerHTML = html + '</tbody>';
}

buildMain();
buildData();
```
